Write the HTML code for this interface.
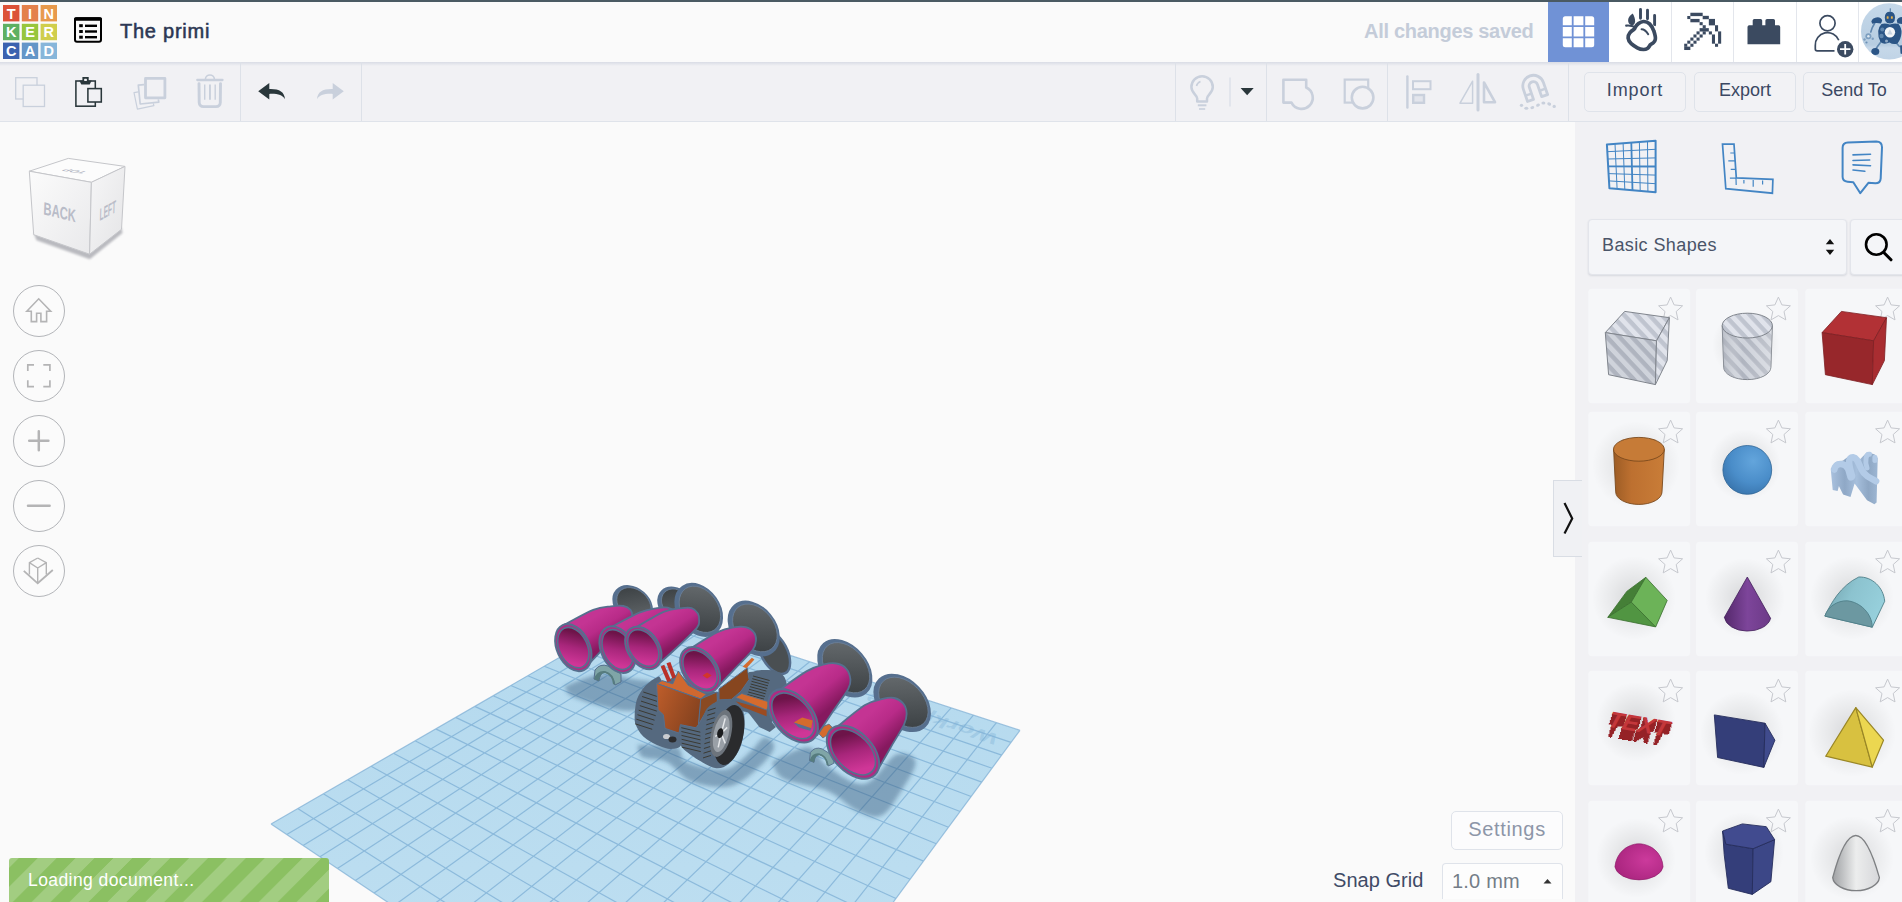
<!DOCTYPE html>
<html lang="en">
<head>
<meta charset="utf-8">
<title>Tinkercad</title>
<style>
*{box-sizing:border-box;margin:0;padding:0}
html,body{width:1902px;height:902px;overflow:hidden;background:#fafafa;font-family:"Liberation Sans",sans-serif;color:#3b4863}
.abs{position:absolute}
#topstrip{left:0;top:0;width:1902px;height:2px;background:#4a5a63}
#header{left:0;top:2px;width:1902px;height:60px;background:#fafafa}
#toolbar{left:0;top:62px;width:1902px;height:60px;background:#f1f1f4;border-bottom:1px solid #dfe3ea}
#toolbar:before{content:"";position:absolute;left:0;top:0;width:100%;height:4px;background:linear-gradient(#d9dce5,#f1f1f4)}
.vdiv{position:absolute;top:62px;width:1px;height:59px;background:#dde1e8}
#viewport{left:0;top:122px;width:1575px;height:780px;background:#fafafa;overflow:hidden}
#panel{left:1575px;top:122px;width:327px;height:780px;background:#f1f1f4;overflow:hidden}
#title{left:120px;top:17px;font-size:20px;line-height:28px;color:#2c3753;font-weight:normal;-webkit-text-stroke:0.55px #2c3753;letter-spacing:0.75px;white-space:nowrap}
#saved{right:368.500px;top:17px;font-size:20px;line-height:28px;color:#c4ccd9;font-weight:bold;white-space:nowrap;letter-spacing:-0.300px}
.htile{position:absolute;top:2px;height:60px;background:#fff;border-left:1px solid #e3e6ec}
.tbtn{position:absolute;top:72px;height:40px;border:1px solid #dfe3ea;border-radius:5px;background:#f2f2f5;font-size:18px;line-height:35px;text-align:center;color:#3b4863;white-space:nowrap}
.tile{position:absolute;width:102px;height:115px;background:#f6f7f9;border-radius:4px}
.navbtn{position:absolute;left:13px;width:52px;height:52px;border:1.150px solid #b3b5b9;border-radius:50%;background:#fbfbfb}
</style>
</head>
<body>
<div id="topstrip" class="abs"></div>
<div id="header" class="abs"></div>
<div id="toolbar" class="abs"></div>
<div id="viewport" class="abs"><!--SCENE-START--><svg class="abs" style="left:0;top:0" width="1575" height="780" viewBox="0 122 1575 780">
<defs>
<linearGradient id="wpg" x1="0" y1="0" x2="0" y2="1"><stop offset="0" stop-color="#b4d9ee"/><stop offset="1" stop-color="#c2e1f2"/></linearGradient>
</defs>
<polygon points="645.0,608.0 1020.0,730.3 726.0,1129.0 271.0,824.0" fill="url(#wpg)"/>
<path d="M645.0 608.0L271.0 824.0M645.0 608.0L1020.0 730.3M659.8 612.8L286.8 834.6M632.0 615.5L1011.0 742.4M675.0 617.8L303.1 845.5M618.6 623.3L1001.7 755.1M690.5 622.9L320.0 856.8M604.7 631.3L992.0 768.3M706.4 628.0L337.4 868.5M590.4 639.5L981.8 782.1M722.6 633.3L355.4 880.6M575.5 648.1L971.2 796.5M739.3 638.7L374.1 893.1M560.2 657.0L960.1 811.5M756.3 644.3L393.4 906.0M544.3 666.2L948.5 827.3M773.7 650.0L413.4 919.5M527.8 675.7L936.3 843.8M791.5 655.8L434.2 933.4M510.8 685.5L923.5 861.1M809.7 661.7L455.7 947.8M493.1 695.7L910.1 879.3M828.4 667.8L478.1 962.8M474.7 706.4L896.0 898.5M847.6 674.1L501.3 978.4M455.6 717.4L881.1 918.6M867.2 680.5L525.5 994.6M435.7 728.9L865.4 939.9M887.4 687.1L550.6 1011.4M415.0 740.8L848.9 962.4M908.1 693.8L576.8 1029.0M393.5 753.2L831.4 986.1M929.3 700.7L604.1 1047.3M371.1 766.2L812.8 1011.3M951.1 707.8L632.6 1066.4M347.7 779.7L793.1 1038.0M973.4 715.1L662.4 1086.3M323.3 793.8L772.1 1066.4M996.4 722.6L693.5 1107.2M297.7 808.6L749.8 1096.7M1020.0 730.3L726.0 1129.0M271.0 824.0L726.0 1129.0" stroke="#6fa5cf" stroke-opacity="0.62" stroke-width="1.2" fill="none"/>
<text transform="matrix(-0.951 -0.31 0.368 -0.499 1000.5 735.5)" font-family="Liberation Sans,sans-serif" font-size="27" font-weight="bold" fill="#7fb2d6" fill-opacity="0.4">Workplane</text>
<defs><filter id="shb" x="-20%" y="-20%" width="140%" height="140%"><feGaussianBlur stdDeviation="2.2"/></filter></defs>
<g filter="url(#shb)" fill="#2f5375" fill-opacity="0.42">
<path d="M564.4 686.3 C570.5 684.3 589.6 675.4 601.0 674.1 C612.4 672.9 623.3 677.4 632.7 679.0 C642.0 680.7 653.4 680.2 657.1 683.9 C660.7 687.6 658.7 696.5 654.6 701.0 C650.6 705.4 641.6 709.9 632.7 710.7 C623.7 711.5 611.1 708.3 601.0 705.9 C590.8 703.4 577.8 699.3 571.7 696.1 C565.6 692.8 565.6 688.0 564.4 686.3 Z" />
<path d="M637.6 744.9 C644.1 745.3 668.5 744.5 676.6 747.3 C684.7 750.2 678.2 758.3 686.3 762.0 C694.5 765.6 714.8 770.9 725.4 769.3 C735.9 767.6 743.3 757.5 749.8 752.2 C756.3 746.9 760.3 738.4 764.4 737.6 C768.5 736.7 775.0 742.4 774.1 747.3 C773.3 752.2 766.8 760.3 759.5 766.8 C752.2 773.3 741.6 783.9 730.2 786.3 C718.9 788.8 701.8 785.5 691.2 781.5 C680.7 777.4 675.0 766.0 666.8 762.0 C658.7 757.9 647.3 759.9 642.4 757.1 C637.6 754.2 638.4 746.9 637.6 744.9 Z" />
<path d="M771.7 762.0 C777.8 759.5 798.9 746.5 808.3 747.3 C817.6 748.1 818.5 760.7 827.8 766.8 C837.2 772.9 853.0 785.9 864.4 783.9 C875.8 781.9 887.6 758.3 896.1 754.6 C904.6 751.0 914.8 755.9 915.6 762.0 C916.4 768.0 906.7 782.3 901.0 791.2 C895.3 800.2 888.8 812.4 881.5 815.6 C874.1 818.9 866.0 814.8 857.1 810.7 C848.1 806.7 840.0 796.5 827.8 791.2 C815.6 785.9 793.3 783.9 783.9 779.0 C774.6 774.1 773.7 764.8 771.7 762.0 Z" />
</g>
<g transform="translate(594.0 665.0) scale(1.00)"><path d="M0 14 L1 5 Q6 -2 14 1 L27 9 L27 17 L21 20 Q19 9 11 7 Q6 7 5 16 Z" fill="#7fa5a7" stroke="#566f8e" stroke-width="1"/><path d="M0 14 L5 16 Q6 8 11 8 Q18 10 19 19 L21 20 Q20 8 11 6 Q3 5 0 14Z" fill="#567c7e"/></g>
<linearGradient id="cb0" gradientUnits="userSpaceOnUse" x1="591.3" y1="618.6" x2="607.1" y2="643.4"><stop offset="0" stop-color="#c43493"/><stop offset="0.45" stop-color="#b82b88"/><stop offset="1" stop-color="#86195f"/></linearGradient>
<linearGradient id="ci0" gradientUnits="userSpaceOnUse" x1="561.2" y1="637.9" x2="585.3" y2="657.3"><stop offset="0" stop-color="#6d1449"/><stop offset="0.5" stop-color="#a8267b"/><stop offset="1" stop-color="#cf3697"/></linearGradient>
<linearGradient id="dg0" gradientUnits="userSpaceOnUse" x1="616.8" y1="592.0" x2="648.5" y2="617.5"><stop offset="0" stop-color="#666b6e"/><stop offset="1" stop-color="#3b4043"/></linearGradient>
<ellipse cx="632.7" cy="604.8" rx="21.3" ry="15.9" transform="rotate(-138.3 632.7 604.8)" fill="#566f8e" stroke="#566f8e" stroke-width="2.5"/>
<ellipse cx="633.9" cy="604.2" rx="19.1" ry="14.3" transform="rotate(-138.3 633.9 604.2)" fill="url(#dg0)" stroke="#6b8099" stroke-width="0.8"/>
<path d="M563.9 625.0 C568.8 622.5 585.4 613.0 593.2 609.9 C601.0 606.8 605.9 607.0 610.9 606.4 C616.0 605.7 620.1 605.4 623.4 606.0 C626.6 606.6 629.0 608.2 630.5 609.9 C631.9 611.6 632.4 613.9 632.2 616.1 C632.1 618.3 633.1 619.1 629.6 623.2 C626.0 627.3 617.5 634.4 610.9 640.9 C604.4 647.5 593.9 658.7 590.5 662.2 Z" fill="url(#cb0)" stroke="#566f8e" stroke-width="1.8" stroke-linejoin="round"/>
<ellipse cx="573.3" cy="647.6" rx="24.8" ry="16.3" transform="rotate(64.7 573.3 647.6)" fill="#b02a82" stroke="#566f8e" stroke-width="2"/>
<ellipse cx="573.3" cy="647.6" rx="21.3" ry="14.1" transform="rotate(64.7 573.3 647.6)" fill="url(#ci0)" stroke="#566f8e" stroke-width="1.6"/>
<linearGradient id="cb1" gradientUnits="userSpaceOnUse" x1="634.3" y1="620.3" x2="651.0" y2="644.5"><stop offset="0" stop-color="#c43493"/><stop offset="0.45" stop-color="#b82b88"/><stop offset="1" stop-color="#86195f"/></linearGradient>
<linearGradient id="ci1" gradientUnits="userSpaceOnUse" x1="605.2" y1="640.3" x2="629.9" y2="659.0"><stop offset="0" stop-color="#6d1449"/><stop offset="0.5" stop-color="#a8267b"/><stop offset="1" stop-color="#cf3697"/></linearGradient>
<linearGradient id="dg1" gradientUnits="userSpaceOnUse" x1="661.2" y1="593.4" x2="691.6" y2="617.5"><stop offset="0" stop-color="#666b6e"/><stop offset="1" stop-color="#3b4043"/></linearGradient>
<ellipse cx="676.4" cy="605.5" rx="20.1" ry="15.2" transform="rotate(-136.0 676.4 605.5)" fill="#566f8e" stroke="#566f8e" stroke-width="2.5"/>
<ellipse cx="677.6" cy="604.9" rx="18.1" ry="13.7" transform="rotate(-136.0 677.6 604.9)" fill="url(#dg1)" stroke="#6b8099" stroke-width="0.8"/>
<path d="M608.3 628.5 C613.5 625.9 631.2 616.0 639.3 612.6 C647.5 609.2 652.3 609.0 657.1 608.1 C661.8 607.3 664.7 607.0 667.7 607.6 C670.7 608.2 673.3 610.0 674.8 611.7 C676.3 613.4 676.7 615.7 676.6 617.9 C676.4 620.1 677.5 620.8 673.9 625.0 C670.4 629.1 661.8 636.5 655.3 642.7 C648.8 648.9 638.3 659.0 634.9 662.2 Z" fill="url(#cb1)" stroke="#566f8e" stroke-width="1.8" stroke-linejoin="round"/>
<ellipse cx="617.6" cy="649.6" rx="24.6" ry="16.3" transform="rotate(64.1 617.6 649.6)" fill="#b02a82" stroke="#566f8e" stroke-width="2"/>
<ellipse cx="617.6" cy="649.6" rx="21.1" ry="14.0" transform="rotate(64.1 617.6 649.6)" fill="url(#ci1)" stroke="#566f8e" stroke-width="1.6"/>
<linearGradient id="cb2" gradientUnits="userSpaceOnUse" x1="660.5" y1="620.8" x2="675.4" y2="644.6"><stop offset="0" stop-color="#c43493"/><stop offset="0.45" stop-color="#b82b88"/><stop offset="1" stop-color="#86195f"/></linearGradient>
<linearGradient id="ci2" gradientUnits="userSpaceOnUse" x1="631.9" y1="638.6" x2="654.7" y2="657.5"><stop offset="0" stop-color="#6d1449"/><stop offset="0.5" stop-color="#a8267b"/><stop offset="1" stop-color="#cf3697"/></linearGradient>
<linearGradient id="dg2" gradientUnits="userSpaceOnUse" x1="678.5" y1="593.1" x2="719.0" y2="626.7"><stop offset="0" stop-color="#666b6e"/><stop offset="1" stop-color="#3b4043"/></linearGradient>
<ellipse cx="698.7" cy="609.9" rx="28.0" ry="20.3" transform="rotate(55.2 698.7 609.9)" fill="#566f8e" stroke="#566f8e" stroke-width="2.5"/>
<ellipse cx="699.9" cy="609.3" rx="25.2" ry="18.2" transform="rotate(55.2 699.9 609.3)" fill="url(#dg2)" stroke="#6b8099" stroke-width="0.8"/>
<path d="M634.0 628.5 C639.0 625.7 656.2 615.1 664.2 611.7 C672.1 608.3 677.3 608.7 681.9 608.1 C686.5 607.5 689.0 607.2 691.6 608.1 C694.3 609.0 696.6 611.4 697.9 613.5 C699.1 615.5 699.2 618.2 699.1 620.5 C699.0 622.9 700.1 623.7 697.0 627.6 C693.8 631.6 686.2 638.7 680.1 644.5 C674.1 650.3 663.9 659.3 660.6 662.2 Z" fill="url(#cb2)" stroke="#566f8e" stroke-width="1.8" stroke-linejoin="round"/>
<ellipse cx="643.3" cy="648.0" rx="23.2" ry="15.6" transform="rotate(57.2 643.3 648.0)" fill="#b02a82" stroke="#566f8e" stroke-width="2"/>
<ellipse cx="643.3" cy="648.0" rx="20.0" ry="13.4" transform="rotate(57.2 643.3 648.0)" fill="url(#ci2)" stroke="#566f8e" stroke-width="1.6"/>
<ellipse cx="774.0" cy="652.0" rx="24.0" ry="13.0" transform="rotate(62.0 774.0 652.0)" fill="#4a4f52" stroke="#566f8e" stroke-width="2.5"/>
<defs><linearGradient id="og1" x1="0" y1="0" x2="1" y2="0.5"><stop offset="0" stop-color="#c05e2b"/><stop offset="1" stop-color="#87431f"/></linearGradient></defs>
<polygon points="662.7,684.7 678.0,673.2 698.4,689.8 721.4,692.4 749.4,672.0 774.9,669.9 783.8,682.2 782.6,702.6 771.1,722.9 749.4,712.7 734.1,708.9 703.5,728.0 672.9,733.1 662.7,722.9" fill="#55697f"/>
<path d="M748.8 681.1 C749.3 679.8 750.1 675.2 751.9 673.4 C753.7 671.5 755.8 670.6 759.6 670.3 C763.5 669.9 771.0 669.9 775.2 671.0 C779.3 672.2 782.5 673.9 784.5 677.2 C786.5 680.6 787.6 687.1 787.3 691.2 C786.9 695.3 784.5 699.6 782.1 702.1 C779.7 704.5 776.6 705.9 772.8 705.9 C769.1 705.9 763.5 704.5 759.6 702.1 C755.8 699.6 751.4 694.7 749.6 691.2 C747.7 687.7 748.9 682.8 748.8 681.1 Z" fill="#55697f"/>
<path d="M753.1 676.0l16.5 4.5M752.3 678.7l16.5 4.5M751.5 681.3l16.5 4.5M750.7 684.0l16.5 4.5M749.9 686.6l16.5 4.5M749.1 689.3l16.5 4.5M748.3 692.0l16.5 4.5M747.5 694.6l16.5 4.5" stroke="#3b3a33" stroke-width="1.0" fill="none"/>
<path d="M634.7 712.9 C635.1 710.6 635.4 703.4 637.1 699.0 C638.7 694.6 641.7 690.0 644.8 686.5 C647.9 683.1 653.0 679.3 655.7 678.0 C658.3 676.7 658.8 674.8 660.7 678.8 C662.5 682.8 664.5 694.0 666.5 702.1 C668.6 710.1 670.4 721.7 672.8 726.9 C675.1 732.1 679.2 730.0 680.5 733.1 C681.9 736.2 682.4 742.9 680.8 745.5 C679.3 748.1 674.9 748.9 671.2 748.9 C667.5 749.0 663.4 747.9 658.8 745.8 C654.1 743.7 647.2 740.1 643.3 736.5 C639.4 732.9 636.9 728.0 635.5 724.1 C634.1 720.2 634.9 714.8 634.7 712.9 Z" fill="#55697f"/>
<path d="M643.3 692.0l17.0 5.5M642.1 696.5l17.0 5.5M641.0 701.1l17.0 5.5M639.8 705.6l17.0 5.5M638.7 710.2l17.0 5.5M637.5 714.7l17.0 5.5M636.4 719.2l17.0 5.5M635.2 723.8l17.0 5.5" stroke="#3b3a33" stroke-width="1.0" fill="none"/>
<polygon points="743.4,705.9 766.6,715.7 775.9,726.9 769.7,731.9 759.6,727.2 748.8,713.2" fill="#55697f"/>
<polygon points="719.0,688.9 747.2,667.9 749.1,679.6 741.0,691.2 731.7,699.3 719.0,699.9" fill="#87461f" stroke="#566f8e" stroke-width="1"/>
<polygon points="742.6,666.7 751.9,657.8 754.4,659.6 746.5,668.2" fill="#d46b2e"/>
<polygon points="735.6,701.3 766.6,710.1 766.6,716.3 742.6,707.0" fill="#9c4b20"/>
<polygon points="735.6,697.4 741.8,693.5 769.7,702.1 766.6,710.1" fill="#d56b2d" stroke="#566f8e" stroke-width="0.8"/>
<polygon points="656.5,683.4 662.2,680.7 672.8,683.8 678.2,671.0 688.3,685.3 706.3,694.3 700.7,699.0" fill="#cf6830" stroke="#566f8e" stroke-width="1"/>
<polygon points="660.7,666.4 664.2,664.8 671.2,680.7 667.3,681.9" fill="#b93129"/>
<polygon points="666.5,663.3 670.4,662.0 675.9,677.2 672.4,678.8" fill="#b93129"/>
<polygon points="700.7,699.0 717.0,692.0 717.4,701.3 706.9,710.1 698.4,724.6" fill="#8a4a22" stroke="#566f8e" stroke-width="1"/>
<polygon points="656.5,683.4 700.7,699.0 698.4,724.6 696.0,727.8 680.5,724.7 679.0,733.1 665.0,728.4 663.4,714.8 658.0,709.8" fill="url(#og1)" stroke="#566f8e" stroke-width="1"/>
<path d="M679.9 725.0 C682.8 725.4 693.1 729.9 697.6 727.2 C702.1 724.5 703.3 713.0 706.9 708.6 C710.5 704.2 715.2 702.3 719.3 700.8 C723.4 699.4 727.8 698.4 731.7 699.9 C735.6 701.4 740.5 705.3 742.6 709.8 C744.7 714.3 744.9 720.4 744.4 726.9 C744.0 733.4 742.4 742.4 739.8 748.6 C737.1 754.8 732.5 760.9 728.6 764.1 C724.7 767.4 720.9 768.6 716.2 768.2 C711.5 767.7 706.4 764.8 700.7 761.3 C695.0 757.9 685.6 751.6 682.1 747.4 C678.5 743.2 679.9 739.9 679.6 736.2 C679.2 732.5 679.8 726.9 679.9 725.0 Z" fill="#55697f"/>
<path d="M681.3 727.7l19.0 4.5M681.4 731.5l19.0 4.5M681.5 735.4l19.0 4.5M681.6 739.3l19.0 4.5M681.7 743.2l19.0 4.5M681.8 747.1l19.0 4.5" stroke="#3b3a33" stroke-width="1.0" fill="none"/>
<path d="M707.7 710.6l8.0 -2.5M707.2 715.3l8.0 -2.5M706.7 720.1l8.0 -2.5M706.3 724.8l8.0 -2.5M705.8 729.5l8.0 -2.5M705.3 734.3l8.0 -2.5M704.9 739.0l8.0 -2.5M704.4 743.7l8.0 -2.5M703.9 748.5l8.0 -2.5M703.5 753.2l8.0 -2.5M703.0 757.9l8.0 -2.5" stroke="#3b3a33" stroke-width="1.0" fill="none"/>
<ellipse cx="729.1" cy="735.0" rx="14" ry="30.5" transform="rotate(13 729.1 735.0)" fill="#2a2b2d"/>
<ellipse cx="721.2" cy="733.4" rx="10" ry="24" transform="rotate(13 721.2 733.4)" fill="#6d747c"/>
<ellipse cx="721.2" cy="733.4" rx="7.5" ry="19" transform="rotate(13 721.2 733.4)" fill="#9aa0a7"/>
<path d="M721.2 733.4 l4 -15 M721.2 733.4 l6 -6 M721.2 733.4 l-6 3 M721.2 733.4 l-3 14 M721.2 733.4 l4 10" stroke="#e4e6e9" stroke-width="1.5"/>
<ellipse cx="720.2" cy="733.4" rx="3" ry="5" transform="rotate(13 721.2 733.4)" fill="#1b1c1e"/>
<ellipse cx="666.5" cy="736.5" rx="3.5" ry="2.6" fill="#c9ccd0"/>
<ellipse cx="672.5" cy="739.5" rx="4" ry="3" fill="#2b2c2e"/>
<linearGradient id="cb3" gradientUnits="userSpaceOnUse" x1="715.5" y1="641.6" x2="732.1" y2="666.5"><stop offset="0" stop-color="#c43493"/><stop offset="0.45" stop-color="#b82b88"/><stop offset="1" stop-color="#86195f"/></linearGradient>
<linearGradient id="ci3" gradientUnits="userSpaceOnUse" x1="687.7" y1="660.1" x2="712.5" y2="679.5"><stop offset="0" stop-color="#6d1449"/><stop offset="0.5" stop-color="#a8267b"/><stop offset="1" stop-color="#cf3697"/></linearGradient>
<linearGradient id="dg3" gradientUnits="userSpaceOnUse" x1="732.7" y1="610.7" x2="774.7" y2="646.4"><stop offset="0" stop-color="#666b6e"/><stop offset="1" stop-color="#3b4043"/></linearGradient>
<ellipse cx="753.7" cy="628.5" rx="29.7" ry="21.0" transform="rotate(51.0 753.7 628.5)" fill="#566f8e" stroke="#566f8e" stroke-width="2.5"/>
<ellipse cx="754.9" cy="627.9" rx="26.7" ry="18.9" transform="rotate(51.0 754.9 627.9)" fill="url(#dg3)" stroke="#6b8099" stroke-width="0.8"/>
<path d="M689.9 648.9 C694.5 646.1 709.8 635.7 717.4 632.1 C724.9 628.4 730.4 627.9 735.1 627.1 C739.8 626.3 742.6 626.3 745.7 627.1 C748.9 627.9 752.0 629.9 753.7 632.1 C755.4 634.2 756.2 637.1 756.0 640.1 C755.9 643.0 756.0 645.4 752.8 649.8 C749.6 654.2 742.5 660.8 736.9 666.7 C731.3 672.6 722.1 682.2 719.1 685.3 Z" fill="url(#cb3)" stroke="#566f8e" stroke-width="1.8" stroke-linejoin="round"/>
<ellipse cx="700.1" cy="669.8" rx="25.2" ry="16.6" transform="rotate(54.2 700.1 669.8)" fill="#b02a82" stroke="#566f8e" stroke-width="2"/>
<ellipse cx="700.1" cy="669.8" rx="21.7" ry="14.3" transform="rotate(54.2 700.1 669.8)" fill="url(#ci3)" stroke="#566f8e" stroke-width="1.6"/>
<polygon points="702.6,675.4 707.1,672.4 711.6,675.4 707.1,678.4" fill="#d2362b"/>
<polygon points="815.1,729.8 829.0,724.1 834.6,729.8 822.9,738.0" fill="#d56b2d" stroke="#566f8e" stroke-width="0.8"/>
<g transform="translate(809.5 748.0) scale(0.90)"><path d="M0 14 L1 5 Q6 -2 14 1 L27 9 L27 17 L21 20 Q19 9 11 7 Q6 7 5 16 Z" fill="#7fa5a7" stroke="#566f8e" stroke-width="1"/><path d="M0 14 L5 16 Q6 8 11 8 Q18 10 19 19 L21 20 Q20 8 11 6 Q3 5 0 14Z" fill="#567c7e"/></g>
<linearGradient id="cb4" gradientUnits="userSpaceOnUse" x1="806.3" y1="682.6" x2="828.2" y2="709.4"><stop offset="0" stop-color="#c43493"/><stop offset="0.45" stop-color="#b82b88"/><stop offset="1" stop-color="#86195f"/></linearGradient>
<linearGradient id="ci4" gradientUnits="userSpaceOnUse" x1="777.7" y1="706.1" x2="808.5" y2="725.5"><stop offset="0" stop-color="#6d1449"/><stop offset="0.5" stop-color="#a8267b"/><stop offset="1" stop-color="#cf3697"/></linearGradient>
<linearGradient id="dg4" gradientUnits="userSpaceOnUse" x1="823.4" y1="649.2" x2="866.2" y2="687.5"><stop offset="0" stop-color="#666b6e"/><stop offset="1" stop-color="#3b4043"/></linearGradient>
<ellipse cx="844.8" cy="668.3" rx="31.9" ry="21.4" transform="rotate(49.5 844.8 668.3)" fill="#566f8e" stroke="#566f8e" stroke-width="2.5"/>
<ellipse cx="846.0" cy="667.7" rx="28.7" ry="19.3" transform="rotate(49.5 846.0 667.7)" fill="url(#dg4)" stroke="#6b8099" stroke-width="0.8"/>
<path d="M778.0 690.9 C782.8 687.7 798.7 675.9 806.4 671.4 C814.1 667.0 819.1 665.7 824.2 664.3 C829.2 663.0 832.9 662.7 836.6 663.5 C840.3 664.2 844.0 666.1 846.3 668.8 C848.6 671.4 850.1 676.0 850.4 679.4 C850.7 682.8 851.0 683.9 848.1 689.2 C845.2 694.5 838.2 703.7 833.0 711.3 C827.9 719.0 819.7 731.3 817.1 735.3 Z" fill="url(#cb4)" stroke="#566f8e" stroke-width="1.8" stroke-linejoin="round"/>
<ellipse cx="793.1" cy="715.8" rx="30.9" ry="19.2" transform="rotate(49.5 793.1 715.8)" fill="#b02a82" stroke="#566f8e" stroke-width="2"/>
<ellipse cx="793.1" cy="715.8" rx="26.6" ry="16.5" transform="rotate(49.5 793.1 715.8)" fill="url(#ci4)" stroke="#566f8e" stroke-width="1.6"/>
<linearGradient id="cb5" gradientUnits="userSpaceOnUse" x1="863.6" y1="718.5" x2="887.5" y2="745.0"><stop offset="0" stop-color="#c43493"/><stop offset="0.45" stop-color="#b82b88"/><stop offset="1" stop-color="#86195f"/></linearGradient>
<linearGradient id="ci5" gradientUnits="userSpaceOnUse" x1="836.6" y1="742.9" x2="869.3" y2="761.4"><stop offset="0" stop-color="#6d1449"/><stop offset="0.5" stop-color="#a8267b"/><stop offset="1" stop-color="#cf3697"/></linearGradient>
<linearGradient id="dg5" gradientUnits="userSpaceOnUse" x1="880.2" y1="683.5" x2="924.2" y2="722.4"><stop offset="0" stop-color="#666b6e"/><stop offset="1" stop-color="#3b4043"/></linearGradient>
<ellipse cx="902.2" cy="702.9" rx="32.4" ry="22.0" transform="rotate(46.2 902.2 702.9)" fill="#566f8e" stroke="#566f8e" stroke-width="2.5"/>
<ellipse cx="903.4" cy="702.3" rx="29.2" ry="19.8" transform="rotate(46.2 903.4 702.3)" fill="url(#dg5)" stroke="#6b8099" stroke-width="0.8"/>
<path d="M836.6 727.3 C841.3 723.6 857.3 709.9 865.0 705.1 C872.6 700.4 877.8 700.1 882.7 698.9 C887.6 697.7 890.8 697.3 894.2 698.0 C897.6 698.8 901.0 700.9 903.1 703.4 C905.2 705.9 906.5 709.6 906.6 713.1 C906.8 716.7 906.5 719.2 904.0 724.6 C901.5 730.1 895.8 738.5 891.6 745.9 C887.3 753.3 880.5 765.1 878.3 769.0 Z" fill="url(#cb5)" stroke="#566f8e" stroke-width="1.8" stroke-linejoin="round"/>
<ellipse cx="853.0" cy="752.1" rx="31.6" ry="19.8" transform="rotate(46.1 853.0 752.1)" fill="#b02a82" stroke="#566f8e" stroke-width="2"/>
<ellipse cx="853.0" cy="752.1" rx="27.2" ry="17.0" transform="rotate(46.1 853.0 752.1)" fill="url(#ci5)" stroke="#566f8e" stroke-width="1.6"/>
<polygon points="793.7,722.4 802.2,717.6 812.7,720.5 811.2,728.3" fill="#d56b2d"/>
<polygon points="793.7,722.4 811.2,728.3 810.2,730.7 798.5,727.3" fill="#56708f"/>
</svg><!--SCENE-END--></div>
<div id="panel" class="abs"></div>
<!--PANEL-START--><svg class="abs" style="left:1575px;top:122px" width="327" height="780" viewBox="1575 122 327 780">
<defs>
<pattern id="stp" width="9.2" height="9.2" patternUnits="userSpaceOnUse" patternTransform="rotate(47)"><rect width="9.2" height="9.2" fill="#cfd3db"/><rect width="9.2" height="4.4" fill="#afb4bf"/></pattern>
<pattern id="stpl" width="9.2" height="9.2" patternUnits="userSpaceOnUse" patternTransform="rotate(47)"><rect width="9.2" height="9.2" fill="#e0e3eb"/><rect width="9.2" height="4.4" fill="#bfc4cf"/></pattern>
<pattern id="stpd" width="9.2" height="9.2" patternUnits="userSpaceOnUse" patternTransform="rotate(47)"><rect width="9.2" height="9.2" fill="#c6cad3"/><rect width="9.2" height="4.400" fill="#aeb3bd"/></pattern>
<radialGradient id="halo"><stop offset="0" stop-color="#000" stop-opacity="0.13"/><stop offset="0.55" stop-color="#000" stop-opacity="0.055"/><stop offset="1" stop-color="#000" stop-opacity="0"/></radialGradient>
<linearGradient id="gcyl" x1="0" x2="1"><stop offset="0" stop-color="#9c5c25"/><stop offset="0.35" stop-color="#bd7030"/><stop offset="1" stop-color="#c97d38"/></linearGradient>
<radialGradient id="gsph" cx="0.62" cy="0.32" r="0.75"><stop offset="0" stop-color="#63a5dc"/><stop offset="0.6" stop-color="#4a8dc9"/><stop offset="1" stop-color="#3873ab"/></radialGradient>
<linearGradient id="gcone" x1="0" x2="1"><stop offset="0" stop-color="#55296c"/><stop offset="0.5" stop-color="#7d459a"/><stop offset="1" stop-color="#6c3a87"/></linearGradient>
<radialGradient id="gdome" cx="0.65" cy="0.45" r="0.7"><stop offset="0" stop-color="#cc3a9c"/><stop offset="1" stop-color="#a8247d"/></radialGradient>
<linearGradient id="gpar" x1="0" x2="1"><stop offset="0" stop-color="#9fa1a4"/><stop offset="0.5" stop-color="#eceded"/><stop offset="1" stop-color="#d6d7da"/></linearGradient>
<linearGradient id="ghc" x1="0" x2="1"><stop offset="0" stop-color="#a6abb5" stop-opacity="0.55"/><stop offset="0.4" stop-color="#fff" stop-opacity="0"/><stop offset="1" stop-color="#fff" stop-opacity="0.25"/></linearGradient>
<filter id="ext" x="-10%" y="-40%" width="120%" height="200%"><feMorphology operator="dilate" radius="0 5"/><feOffset dy="5.500"/></filter>
<linearGradient id="gscr" x1="0" x2="1"><stop offset="0" stop-color="#a9c1de"/><stop offset="0.3" stop-color="#8fa8c6"/><stop offset="0.55" stop-color="#a6bfdc"/><stop offset="0.8" stop-color="#8ea7c4"/><stop offset="1" stop-color="#9db6d3"/></linearGradient>
<linearGradient id="grr" x1="0" y1="0" x2="1" y2="0.4"><stop offset="0" stop-color="#6f9fa9"/><stop offset="0.5" stop-color="#8cc3cf"/><stop offset="1" stop-color="#96cfdb"/></linearGradient>
</defs>
<rect x="1588.2" y="288.8" width="102" height="114.4" rx="4" fill="#f6f7f9"/>
<polygon points="1670.6,297.1 1674.1,304.9 1682.6,305.8 1676.2,311.5 1678.0,319.9 1670.6,315.6 1663.2,319.9 1665.0,311.5 1658.6,305.8 1667.1,304.9" fill="none" stroke="#c6c8ce" stroke-width="1" stroke-linejoin="round"/>
<rect x="1696.0" y="288.8" width="102" height="114.4" rx="4" fill="#f6f7f9"/>
<circle cx="1746.0" cy="345.0" r="34.0" fill="url(#halo)"/>
<polygon points="1778.4,297.1 1781.9,304.9 1790.4,305.8 1784.0,311.5 1785.8,319.9 1778.4,315.6 1771.0,319.9 1772.8,311.5 1766.4,305.8 1774.9,304.9" fill="none" stroke="#c6c8ce" stroke-width="1" stroke-linejoin="round"/>
<rect x="1805.2" y="288.8" width="102" height="114.4" rx="4" fill="#f6f7f9"/>
<polygon points="1887.6,297.1 1891.1,304.9 1899.6,305.8 1893.2,311.5 1895.0,319.9 1887.6,315.6 1880.2,319.9 1882.0,311.5 1875.6,305.8 1884.1,304.9" fill="none" stroke="#c6c8ce" stroke-width="1" stroke-linejoin="round"/>
<rect x="1588.2" y="411.8" width="102" height="114.4" rx="4" fill="#f6f7f9"/>
<circle cx="1636.0" cy="465.0" r="44.0" fill="url(#halo)"/>
<polygon points="1670.6,420.1 1674.1,427.9 1682.6,428.8 1676.2,434.5 1678.0,442.9 1670.6,438.6 1663.2,442.9 1665.0,434.5 1658.6,428.8 1667.1,427.9" fill="none" stroke="#c6c8ce" stroke-width="1" stroke-linejoin="round"/>
<rect x="1696.0" y="411.8" width="102" height="114.4" rx="4" fill="#f6f7f9"/>
<circle cx="1745.0" cy="465.0" r="36.0" fill="url(#halo)"/>
<polygon points="1778.4,420.1 1781.9,427.9 1790.4,428.8 1784.0,434.5 1785.8,442.9 1778.4,438.6 1771.0,442.9 1772.8,434.5 1766.4,428.8 1774.9,427.9" fill="none" stroke="#c6c8ce" stroke-width="1" stroke-linejoin="round"/>
<rect x="1805.2" y="411.8" width="102" height="114.4" rx="4" fill="#f6f7f9"/>
<polygon points="1887.6,420.1 1891.1,427.9 1899.6,428.8 1893.2,434.5 1895.0,442.9 1887.6,438.6 1880.2,442.9 1882.0,434.5 1875.6,428.8 1884.1,427.9" fill="none" stroke="#c6c8ce" stroke-width="1" stroke-linejoin="round"/>
<rect x="1588.2" y="541.8" width="102" height="114.4" rx="4" fill="#f6f7f9"/>
<circle cx="1634.0" cy="598.0" r="42.0" fill="url(#halo)"/>
<polygon points="1670.6,550.1 1674.1,557.9 1682.6,558.8 1676.2,564.5 1678.0,572.9 1670.6,568.6 1663.2,572.9 1665.0,564.5 1658.6,558.8 1667.1,557.9" fill="none" stroke="#c6c8ce" stroke-width="1" stroke-linejoin="round"/>
<rect x="1696.0" y="541.8" width="102" height="114.4" rx="4" fill="#f6f7f9"/>
<circle cx="1745.0" cy="598.0" r="40.0" fill="url(#halo)"/>
<polygon points="1778.4,550.1 1781.9,557.9 1790.4,558.8 1784.0,564.5 1785.8,572.9 1778.4,568.6 1771.0,572.9 1772.8,564.5 1766.4,558.8 1774.9,557.9" fill="none" stroke="#c6c8ce" stroke-width="1" stroke-linejoin="round"/>
<rect x="1805.2" y="541.8" width="102" height="114.4" rx="4" fill="#f6f7f9"/>
<circle cx="1852.0" cy="598.0" r="42.0" fill="url(#halo)"/>
<polygon points="1887.6,550.1 1891.1,557.9 1899.6,558.8 1893.2,564.5 1895.0,572.9 1887.6,568.6 1880.2,572.9 1882.0,564.5 1875.6,558.8 1884.1,557.9" fill="none" stroke="#c6c8ce" stroke-width="1" stroke-linejoin="round"/>
<rect x="1588.2" y="670.8" width="102" height="114.4" rx="4" fill="#f6f7f9"/>
<circle cx="1636.0" cy="722.0" r="40.0" fill="url(#halo)"/>
<polygon points="1670.6,679.1 1674.1,686.9 1682.6,687.8 1676.2,693.5 1678.0,701.9 1670.6,697.6 1663.2,701.9 1665.0,693.5 1658.6,687.8 1667.1,686.9" fill="none" stroke="#c6c8ce" stroke-width="1" stroke-linejoin="round"/>
<rect x="1696.0" y="670.8" width="102" height="114.4" rx="4" fill="#f6f7f9"/>
<circle cx="1742.0" cy="733.0" r="42.0" fill="url(#halo)"/>
<polygon points="1778.4,679.1 1781.9,686.9 1790.4,687.8 1784.0,693.5 1785.8,701.9 1778.4,697.6 1771.0,701.9 1772.8,693.5 1766.4,687.8 1774.9,686.9" fill="none" stroke="#c6c8ce" stroke-width="1" stroke-linejoin="round"/>
<rect x="1805.2" y="670.8" width="102" height="114.4" rx="4" fill="#f6f7f9"/>
<circle cx="1852.0" cy="733.0" r="44.0" fill="url(#halo)"/>
<polygon points="1887.6,679.1 1891.1,686.9 1899.6,687.8 1893.2,693.5 1895.0,701.9 1887.6,697.6 1880.2,701.9 1882.0,693.5 1875.6,687.8 1884.1,686.9" fill="none" stroke="#c6c8ce" stroke-width="1" stroke-linejoin="round"/>
<rect x="1588.2" y="800.8" width="102" height="114.4" rx="4" fill="#f6f7f9"/>
<circle cx="1636.0" cy="858.0" r="40.0" fill="url(#halo)"/>
<polygon points="1670.6,809.1 1674.1,816.9 1682.6,817.8 1676.2,823.5 1678.0,831.9 1670.6,827.6 1663.2,831.9 1665.0,823.5 1658.6,817.8 1667.1,816.9" fill="none" stroke="#c6c8ce" stroke-width="1" stroke-linejoin="round"/>
<rect x="1696.0" y="800.8" width="102" height="114.4" rx="4" fill="#f6f7f9"/>
<circle cx="1744.0" cy="852.0" r="40.0" fill="url(#halo)"/>
<polygon points="1778.4,809.1 1781.9,816.9 1790.4,817.8 1784.0,823.5 1785.8,831.9 1778.4,827.6 1771.0,831.9 1772.8,823.5 1766.4,817.8 1774.9,816.9" fill="none" stroke="#c6c8ce" stroke-width="1" stroke-linejoin="round"/>
<rect x="1805.2" y="800.8" width="102" height="114.4" rx="4" fill="#f6f7f9"/>
<circle cx="1852.0" cy="858.0" r="42.0" fill="url(#halo)"/>
<polygon points="1887.6,809.1 1891.1,816.9 1899.6,817.8 1893.2,823.5 1895.0,831.9 1887.6,827.6 1880.2,831.9 1882.0,823.5 1875.6,817.8 1884.1,816.9" fill="none" stroke="#c6c8ce" stroke-width="1" stroke-linejoin="round"/>
<polygon points="1606.9,144.4 1655.6,140.7 1655.6,192.3 1609.4,188.2" fill="none" stroke="#4385c4" stroke-width="2" stroke-linejoin="round"/>
<path d="M1615.0 143.8L1617.1 188.9" stroke="#4385c4" stroke-width="1.0"/>
<path d="M1607.3 151.7L1655.6 149.3" stroke="#4385c4" stroke-width="1.0"/>
<path d="M1623.1 143.2L1624.8 189.6" stroke="#4385c4" stroke-width="1.0"/>
<path d="M1607.7 159.0L1655.6 157.9" stroke="#4385c4" stroke-width="1.0"/>
<path d="M1631.3 142.5L1632.5 190.3" stroke="#4385c4" stroke-width="1.8"/>
<path d="M1608.1 166.3L1655.6 166.5" stroke="#4385c4" stroke-width="1.8"/>
<path d="M1639.4 141.9L1640.2 191.0" stroke="#4385c4" stroke-width="1.0"/>
<path d="M1608.5 173.6L1655.6 175.1" stroke="#4385c4" stroke-width="1.0"/>
<path d="M1647.5 141.3L1647.9 191.7" stroke="#4385c4" stroke-width="1.0"/>
<path d="M1608.9 180.9L1655.6 183.7" stroke="#4385c4" stroke-width="1.0"/>
<polygon points="1722.5,144.1 1734.0,144.1 1736.3,177.9 1772.9,179.4 1772.4,193.2 1725.8,188.7" fill="none" stroke="#4385c4" stroke-width="1.7" stroke-linejoin="miter"/>
<path d="M1730.3 153.0 L1734.4 153.0 M1728.3 160.8 L1735.0 160.8 M1730.7 169.4 L1735.5 169.4 M1729.9 178.1 L1736.3 178.1 M1736.0 178.4 L1736.2 185.0 M1743.9 180.0 L1743.9 183.5 M1753.2 180.0 L1753.2 186.8 M1762.6 180.4 L1762.6 184.5" stroke="#4385c4" stroke-width="1.2" fill="none"/>
<path d="M1847.9 142.5 L1876.3 141.5 Q1882.0 141.5 1882.0 147.2 L1880.7 178.4 Q1880.4 183.3 1875.4 183.3 L1868.4 182.8 L1860.3 193.2 L1853.3 182.2 L1847.5 181.7 Q1842.6 181.2 1842.6 176.8 L1842.6 147.7 Q1842.6 142.8 1847.9 142.5 Z" fill="none" stroke="#4385c4" stroke-width="2" stroke-linejoin="round"/>
<path d="M1853.0 154.9 L1870.5 154.3 M1853.0 160.5 L1869.7 160.0 M1853.0 164.9 L1870.5 165.8 M1853.0 170.0 L1864.8 171.3" stroke="#4385c4" stroke-width="1.6" fill="none" stroke-linecap="round"/>
<polygon points="1605.3,332.6 1624.7,311.4 1669.4,317.7 1656.5,340.8" fill="url(#stpl)" stroke="#80858d" stroke-width="1" stroke-linejoin="round"/>
<polygon points="1605.3,332.6 1656.5,340.8 1655.4,384.6 1608.6,374.7" fill="url(#stp)" stroke="#80858d" stroke-width="1" stroke-linejoin="round"/>
<polygon points="1656.5,340.8 1669.4,317.7 1667.2,360.6 1655.4,384.6" fill="url(#stpl)" stroke="#80858d" stroke-width="1" stroke-linejoin="round"/>

<path d="M1722.2 325.6 L1723.7 367.2 A23.6 12.4 0 0 0 1770.9 367.2 L1772.4 325.6 Z" fill="url(#stp)" stroke="#80858d" stroke-width="1"/>
<path d="M1722.2 325.6 L1723.7 367.2 A23.6 12.4 0 0 0 1770.9 367.2 L1772.4 325.6 Z" fill="url(#ghc)"/>
<ellipse cx="1747.3" cy="325.6" rx="25.1" ry="12.4" fill="url(#stpl)" stroke="#80858d" stroke-width="1"/>
<polygon points="1822.1,332.6 1841.4,311.4 1886.5,317.7 1873.6,340.8" fill="#b23135" stroke="#7d1f23" stroke-width="0.8" stroke-linejoin="round"/>
<polygon points="1822.1,332.6 1873.6,340.8 1872.3,384.6 1825.4,374.7" fill="#97272b" stroke="#7d1f23" stroke-width="0.8" stroke-linejoin="round"/>
<polygon points="1873.6,340.8 1886.5,317.7 1884.4,360.6 1872.3,384.6" fill="#a92d31" stroke="#7d1f23" stroke-width="0.8" stroke-linejoin="round"/>
<path d="M1613.6 449.3 L1615.7 491.9 A23.1 12.5 0 0 0 1662.0 491.9 L1664.3 449.3 Z" fill="url(#gcyl)" stroke="#7a4a1d" stroke-width="0.9"/>
<ellipse cx="1638.9" cy="449.3" rx="25.4" ry="11.9" fill="#c67b37" stroke="#7a4a1d" stroke-width="0.9"/>
<ellipse cx="1747.3" cy="469.9" rx="24.4" ry="24.4" fill="url(#gsph)" stroke="#2f6496" stroke-width="0.8"/>
<path d="M1830.7 468.8 L1832.7 489.9 L1837.6 491.1 L1838.9 486.1 L1843.1 494.4 L1850.5 496.9 L1854.6 483.6 L1867.0 500.2 L1874.4 504.3 L1876.6 502.6 L1877.7 458.1 L1874.4 454.3 L1867.0 452.3 L1858.8 460.5 L1850.5 454.8 L1843.1 460.5 L1835.6 462.2 Z" fill="url(#gscr)"/>
<path d="M1834.3 469.6 C1835.6 462.2 1844.7 462.2 1848.0 468.8 C1850.5 473.7 1849.7 480.3 1852.2 476.2 C1848.9 465.5 1847.2 457.2 1853.0 457.2 C1858.8 458.1 1858.8 467.1 1863.7 472.9 C1868.7 478.7 1873.6 479.5 1876.1 481.2" fill="none" stroke="#b3cbe7" stroke-width="6.5" stroke-linecap="round" stroke-linejoin="round"/>
<path d="M1867.0 468.0 C1864.5 460.5 1866.2 453.9 1869.5 454.3 M1874.9 457.2 L1874.9 460.5" fill="none" stroke="#b3cbe7" stroke-width="5" stroke-linecap="round"/>
<polygon points="1645.8,577.3 1631.3,602.1 1607.8,617.3 1626.8,591.4" fill="#457f37" stroke="#3a6e2e" stroke-width="0.8" stroke-linejoin="round"/>
<polygon points="1607.8,617.3 1631.3,602.1 1655.7,626.9" fill="#519542" stroke="#3a6e2e" stroke-width="0.8" stroke-linejoin="round"/>
<polygon points="1645.8,577.3 1667.2,600.4 1655.7,626.9 1631.3,602.1" fill="#6cb358" stroke="#3a6e2e" stroke-width="0.8" stroke-linejoin="round"/>
<path d="M1747.3 577.0 L1724.4 617.3 A23.3 15.2 0 0 0 1770.6 618.3 Z" fill="url(#gcone)" stroke="#43205a" stroke-width="0.8" stroke-linejoin="round"/>
<path d="M1824.9 616.1 C1830.7 603.7 1840.6 585.6 1858.8 577.0 C1872.0 576.5 1883.5 587.2 1884.7 601.3 L1872.3 627.2 Z" fill="url(#grr)" stroke="#4f7f89" stroke-width="0.9" stroke-linejoin="round"/>
<path d="M1824.9 616.1 C1827.4 607.0 1837.3 600.4 1847.2 600.8 C1860.4 602.1 1872.0 613.6 1872.3 627.2 Z" fill="#6c98a1" stroke="#4f7f89" stroke-width="0.9" stroke-linejoin="round"/>
<g transform="translate(1606.5 726.5) matrix(1 0.17 -0.28 0.92 0 0)" font-family="Liberation Sans,sans-serif" font-weight="bold" font-style="italic" font-size="23.8" letter-spacing="-0.3"><text x="0" y="0" fill="#952428" filter="url(#ext)">TEXT</text><text x="0" y="0" fill="#c4373b">TEXT</text></g>
<polygon points="1714.3,714.9 1765.0,723.2 1763.8,767.4 1717.6,757.5" fill="#343e79" stroke="#262e5c" stroke-width="0.9" stroke-linejoin="round"/>
<polygon points="1765.0,723.2 1774.9,740.2 1763.8,767.4" fill="#404b8d" stroke="#262e5c" stroke-width="0.9" stroke-linejoin="round"/>
<polygon points="1855.8,707.6 1825.7,756.2 1872.3,767.1" fill="#d8c140" stroke="#9a8726" stroke-width="1.2" stroke-linejoin="round"/>
<polygon points="1855.8,707.6 1872.3,767.1 1883.5,740.2" fill="#ecd750" stroke="#9a8726" stroke-width="1.2" stroke-linejoin="round"/>
<path d="M1614.9 866.9 C1616.1 852.8 1627.6 843.8 1638.9 843.8 C1650.7 843.8 1662.3 852.8 1663.1 866.9 A24.3 14.9 0 0 1 1614.9 866.9 Z" fill="url(#gdome)" stroke="#8a1c66" stroke-width="0.6"/>
<polygon points="1722.6,831.0 1725.9,844.2 1753.1,848.7 1752.3,894.4 1728.3,888.3 1724.2,854.5" fill="#343e7a" stroke="#262e5c" stroke-width="0.9" stroke-linejoin="round"/>
<polygon points="1753.1,848.7 1774.6,839.6 1770.9,881.7 1752.3,894.4" fill="#3c4787" stroke="#262e5c" stroke-width="0.9" stroke-linejoin="round"/>
<polygon points="1722.6,831.0 1742.4,823.9 1766.3,826.7 1774.6,839.6 1753.1,848.7 1725.9,844.2" fill="#414b8f" stroke="#262e5c" stroke-width="0.9" stroke-linejoin="round"/>
<path d="M1832.7 877.6 C1838.9 854.5 1847.2 835.5 1855.8 835.5 C1864.5 835.5 1872.8 854.5 1879.4 877.6 A23.4 14.0 0 0 1 1832.7 877.6 Z" fill="url(#gpar)" stroke="#7e8083" stroke-width="1.300"/>
</svg>
<div class="abs" style="left:1588px;top:219px;width:259px;height:56px;background:#f4f5f8;border-radius:4px;border:1px solid #e3e5eb;box-shadow:0 1px 2px rgba(60,70,90,.14);font-size:18px;line-height:51px;padding-left:13px;color:#4a5468;letter-spacing:0.4px;white-space:nowrap">Basic Shapes</div>
<svg class="abs" style="left:1822px;top:236px" width="16" height="22" viewBox="0 0 16 22"><path d="M3.800 8.300 L8 3 L12.200 8.300 Z M3.800 13.700 L8 19 L12.200 13.700 Z" fill="#111"/></svg>
<div class="abs" style="left:1850px;top:219px;width:60px;height:56px;background:#f4f5f8;border-radius:4px;border:1px solid #e3e5eb;box-shadow:0 1px 2px rgba(60,70,90,.14)"></div>
<svg class="abs" style="left:1860px;top:228px" width="40" height="40" viewBox="1860 228 40 40"><circle cx="1876.300" cy="244.500" r="10.300" fill="none" stroke="#000" stroke-width="2.600"/><path d="M1883.800 252.500 L1891 259.800" stroke="#000" stroke-width="3" stroke-linecap="round"/></svg><!--PANEL-END-->
<svg class="abs" style="left:3px;top:5px" width="54" height="54" viewBox="0 0 54 54"><rect x="0.0" y="0.0" width="16.4" height="16.4" fill="#dc5238"/><text x="8.2" y="13.6" font-family="Liberation Sans,sans-serif" font-weight="bold" font-size="14.5" fill="#fff" text-anchor="middle">T</text><rect x="18.8" y="0.0" width="16.4" height="16.4" fill="#e4814b"/><text x="27.0" y="13.6" font-family="Liberation Sans,sans-serif" font-weight="bold" font-size="14.5" fill="#fff" text-anchor="middle">I</text><rect x="37.6" y="0.0" width="16.4" height="16.4" fill="#e89a4c"/><text x="45.8" y="13.6" font-family="Liberation Sans,sans-serif" font-weight="bold" font-size="14.5" fill="#fff" text-anchor="middle">N</text><rect x="0.0" y="18.8" width="16.4" height="16.4" fill="#5eb062"/><text x="8.2" y="32.4" font-family="Liberation Sans,sans-serif" font-weight="bold" font-size="14.5" fill="#fff" text-anchor="middle">K</text><rect x="18.8" y="18.8" width="16.4" height="16.4" fill="#98c63d"/><text x="27.0" y="32.4" font-family="Liberation Sans,sans-serif" font-weight="bold" font-size="14.5" fill="#fff" text-anchor="middle">E</text><rect x="37.6" y="18.8" width="16.4" height="16.4" fill="#d0ce4c"/><text x="45.8" y="32.4" font-family="Liberation Sans,sans-serif" font-weight="bold" font-size="14.5" fill="#fff" text-anchor="middle">R</text><rect x="0.0" y="37.6" width="16.4" height="16.4" fill="#3c62b0"/><text x="8.2" y="51.2" font-family="Liberation Sans,sans-serif" font-weight="bold" font-size="14.5" fill="#fff" text-anchor="middle">C</text><rect x="18.8" y="37.6" width="16.4" height="16.4" fill="#6496c8"/><text x="27.0" y="51.2" font-family="Liberation Sans,sans-serif" font-weight="bold" font-size="14.5" fill="#fff" text-anchor="middle">A</text><rect x="37.6" y="37.6" width="16.4" height="16.4" fill="#87b6da"/><text x="45.8" y="51.2" font-family="Liberation Sans,sans-serif" font-weight="bold" font-size="14.5" fill="#fff" text-anchor="middle">D</text></svg>
<svg class="abs" style="left:73px;top:16px" width="30" height="28" viewBox="0 0 30 28">
<rect x="2" y="2.3" width="26" height="23.4" rx="2" fill="#fafafa" stroke="#000" stroke-width="2"/>
<rect x="1" y="1.3" width="28" height="3.4" rx="1.5" fill="#000"/>
<g fill="#000"><rect x="6.2" y="8.2" width="3.6" height="3"/><rect x="12" y="8.6" width="12" height="2.4"/>
<rect x="6.2" y="14" width="3.6" height="3"/><rect x="12" y="14.3" width="12" height="2.4"/>
<rect x="6.2" y="19.7" width="3.6" height="3"/><rect x="12" y="20" width="12" height="2.4"/></g>
</svg>
<div id="title" class="abs">The primi</div>
<div id="saved" class="abs">All changes saved</div>
<div class="htile" style="left:1548px;width:61px;background:#7092d6;border-left:none"></div>
<div class="htile" style="left:1609px;width:62px;border-left:none"></div>
<div class="htile" style="left:1671px;width:62px"></div>
<div class="htile" style="left:1733px;width:63px"></div>
<div class="htile" style="left:1796px;width:62px"></div>
<div class="htile" style="left:1858px;width:44px"></div>

<svg class="abs" style="left:1540px;top:0" width="362" height="64" viewBox="1540 0 362 64" fill="none">
<!-- grid -->
<rect x="1562.8" y="16.2" width="31.4" height="31" rx="2.5" fill="#fff"/>
<path d="M1572.7 16 V48 M1584.3 16 V48 M1562 26.200 H1595 M1562 37.400 H1595" stroke="#7092d6" stroke-width="1.800"/>
<!-- apple -->
<path d="M1635.300 27.300 C1636.500 24.800 1640 21.600 1643.500 21.500 C1646.500 21.400 1648.500 22.800 1649.600 23.900 C1652 26.400 1653.200 28.800 1653.800 30.900 C1655 34.500 1655.800 37.500 1655.300 39.400 C1655 41 1654.300 42 1653.500 42.600 C1652 43.800 1651 44 1650.300 44.800 C1649.300 46 1648.800 47.600 1647.400 48.500 C1646.200 49.300 1644.800 49.500 1643.500 49.500 C1641 49.500 1639 48.800 1637.300 47.800 C1635 46.500 1633 45.300 1631.200 43.600 C1629.500 42 1628.300 40 1628.100 38 C1627.900 36 1628.600 34.300 1629.800 32.800 C1630.800 31.500 1632.300 30.500 1633.600 29.700 C1634.300 29.200 1635 28.300 1635.300 27.300 Z" stroke="#3b4a60" stroke-width="3.700" stroke-linejoin="round"/>
<path d="M1632.700 13.600 C1629 15.800 1627.300 19.500 1628.500 22.500 C1629.200 24.200 1630.800 25.300 1632.500 25.500 C1634 24.800 1635 23.400 1635.100 21.500 C1635.200 18.800 1634 15.800 1632.700 13.600 Z" fill="#3b4a60"/>
<path d="M1626.200 25.600 C1629 25.300 1632.500 25.800 1635.300 27.300" stroke="#3b4a60" stroke-width="2.200" stroke-linecap="round"/>
<path d="M1640.500 9.400 V18.300 M1647.500 10.300 V18.800 M1654.600 15.500 V24.500" stroke="#3b4a60" stroke-width="2.900" stroke-linecap="round"/>
<path d="M1654.600 24.500 L1656 26.400 L1656 20 Z" fill="#3b4a60"/>
<path d="M1641.600 29.200 C1644.500 29.200 1646.500 31.500 1648.200 34.200" stroke="#3b4a60" stroke-width="2" stroke-linecap="round"/>
<!-- pickaxe -->
<g fill="#3b4a60"><rect x="1690.36" y="12.75" width="12.32" height="3.38"/><rect x="1687.28" y="15.98" width="3.08" height="3.08"/><rect x="1702.68" y="15.83" width="6.16" height="3.38"/><rect x="1690.36" y="18.91" width="9.24" height="3.38"/><rect x="1708.84" y="18.91" width="6.16" height="3.38"/><rect x="1699.60" y="22.14" width="3.08" height="3.08"/><rect x="1708.84" y="21.99" width="6.16" height="3.38"/><rect x="1702.68" y="25.22" width="3.08" height="3.08"/><rect x="1715.00" y="25.22" width="3.08" height="6.16"/><rect x="1699.60" y="28.15" width="9.24" height="3.38"/><rect x="1696.52" y="31.38" width="3.08" height="3.08"/><rect x="1702.68" y="31.38" width="3.08" height="3.08"/><rect x="1708.84" y="31.38" width="3.08" height="3.08"/><rect x="1718.08" y="31.38" width="3.08" height="12.32"/><rect x="1693.44" y="34.46" width="3.08" height="3.08"/><rect x="1699.60" y="34.46" width="3.08" height="3.08"/><rect x="1711.92" y="34.46" width="3.08" height="9.24"/><rect x="1690.36" y="37.54" width="3.08" height="3.08"/><rect x="1696.52" y="37.54" width="3.08" height="3.08"/><rect x="1687.28" y="40.62" width="3.08" height="3.08"/><rect x="1693.44" y="40.62" width="3.08" height="3.08"/><rect x="1684.20" y="43.70" width="3.08" height="3.08"/><rect x="1690.36" y="43.70" width="3.08" height="3.08"/><rect x="1715.00" y="43.70" width="3.08" height="3.08"/><rect x="1684.20" y="46.63" width="6.16" height="3.38"/></g>
<!-- brick -->
<path d="M1747.500 27 Q1747.500 25.300 1749.200 25.300 H1752.700 V20.600 Q1752.700 19 1754.300 19 H1760.600 Q1762.200 19 1762.200 20.600 V25.300 H1765.400 V20.600 Q1765.400 19 1767 19 H1773.400 Q1775 19 1775 20.600 V25.300 H1778.500 Q1780.200 25.300 1780.200 27 V44.200 H1747.500 Z" fill="#3b4a60"/>
<!-- person -->
<circle cx="1827.500" cy="23.200" r="7.600" stroke="#3b4a60" stroke-width="1.700"/>
<path d="M1834.500 50.800 H1817.200 Q1815.300 50.800 1815.300 48.900 V45.500 A12.200 12.200 0 0 1 1838.800 40.300" stroke="#3b4a60" stroke-width="1.700"/>
<circle cx="1845.200" cy="49.200" r="8.200" fill="#3b4a60"/>
<path d="M1840 49.200 H1850.400 M1845.200 44 V54.400" stroke="#fff" stroke-width="1.800"/>
<!-- avatar -->
<defs><clipPath id="avc"><circle cx="1889.200" cy="31.400" r="28.200"/></clipPath>
<linearGradient id="avg" x1="0" y1="0" x2="0" y2="1"><stop offset="0" stop-color="#c6d9ea"/><stop offset="0.7" stop-color="#b7cde1"/><stop offset="0.75" stop-color="#c6d8e9"/><stop offset="1" stop-color="#bed2e5"/></linearGradient></defs>
<g clip-path="url(#avc)">
<rect x="1858" y="0" width="50" height="64" fill="url(#avg)"/>
<g stroke="#5f86ad" stroke-width="1.600" fill="none" stroke-linecap="round">
<path d="M1874.500 23.500 L1872.300 27.500 L1870.800 32"/>
<path d="M1881.200 41.500 L1877.500 46.500 L1875.500 49.500"/>
<path d="M1895.800 42.500 L1899.500 46.500"/>
</g>
<g fill="#2b5586">
<path d="M1884.800 17.500 Q1884.800 11.700 1889.900 11.700 Q1895 11.700 1895 17.500 L1894.500 21 Q1893 23.600 1889.900 23.600 Q1886.800 23.600 1885.300 21 Z"/>
<rect x="1889.700" y="8.300" width="1.200" height="3.800" fill="#5f86ad"/>
<path d="M1871.300 21.500 Q1872.500 17.800 1877.500 17.300 Q1881.500 17.500 1882.200 20.500 L1881 23.600 Q1876 22.500 1872.300 23.800 Z"/>
<path d="M1896.800 20.500 Q1898 17.200 1902.500 17 L1902.500 24.200 Q1899 23 1897.500 23.600 Z"/>
<path d="M1881.500 24 Q1885 22.800 1889.900 24.500 Q1895 22.800 1898.500 24 Q1901.800 28 1901.500 33 Q1901 39 1897.500 43.500 Q1893 45 1889.500 42.500 Q1884 45 1880.500 42 Q1877.800 37 1878.200 31 Q1878.800 26.500 1881.500 24 Z"/>
<ellipse cx="1875.300" cy="51.500" rx="4" ry="3.600"/>
<path d="M1900 45.500 L1903 45 L1903 54.500 L1900.500 53.500 Z"/>
</g>
<circle cx="1889.900" cy="32.300" r="5.200" fill="#f3f6f9"/>
<path d="M1889.900 29.300 L1892.600 34.500 H1887.200 Z" fill="#c9d6e4"/>
<circle cx="1882.300" cy="29.500" r="2" fill="#5f86ad"/><circle cx="1881.500" cy="36" r="2.200" fill="#5f86ad"/><circle cx="1886.500" cy="41" r="1.500" fill="#8fa9c4"/>
<rect x="1886.700" y="16.200" width="1.900" height="2.600" rx="0.600" fill="#e8b24a"/><rect x="1890.900" y="16.200" width="1.900" height="2.600" rx="0.600" fill="#e8b24a"/>
<circle cx="1868.400" cy="36.300" r="3" fill="#7d9fc0"/><circle cx="1868.400" cy="36.300" r="1.200" fill="#dfe9f2"/>
<circle cx="1872.700" cy="38.800" r="1.200" fill="#7d9fc0"/><circle cx="1864.500" cy="39.500" r="1.200" fill="#7d9fc0"/><circle cx="1866.500" cy="42.500" r="1.100" fill="#6a8fb5"/>
</g>
</svg>



<div class="vdiv" style="left:240px"></div><div class="vdiv" style="left:361px"></div>
<div class="vdiv" style="left:1175px"></div><div class="vdiv" style="left:1266px"></div>
<div class="vdiv" style="left:1387px"></div><div class="vdiv" style="left:1568px"></div>
<svg class="abs" style="left:0;top:62px" width="1580" height="60" viewBox="0 62 1580 60" fill="none">
<!-- copy -->
<rect x="15.7" y="77.7" width="21.3" height="21.3" stroke="#c9d0dc" stroke-width="1.3"/>
<rect x="23.2" y="85.2" width="21.3" height="21.3" stroke="#c9d0dc" stroke-width="1.3" fill="#f1f1f4"/>
<!-- paste -->
<rect x="75.900" y="81" width="19.400" height="25.200" stroke="#2a373b" stroke-width="1.550"/>
<path d="M79.300 80.400 L81.300 84.600 L89.700 84.600 L91.700 80.400 L88.700 80.400 L88.700 77.100 L82.400 77.100 L82.400 80.400 Z" fill="#2a373b"/>
<rect x="84.200" y="78.700" width="2.700" height="2.400" rx="0.500" fill="#f1f1f4"/>
<rect x="87.900" y="88.600" width="13.400" height="13.400" stroke="#2a373b" stroke-width="1.550" fill="#f1f1f4"/>
<!-- duplicate -->
<path d="M138.400 91.900 L134 92.700 L137.400 109.100 L153.900 105.600 L153.300 103.400" stroke="#c9d0dc" stroke-width="1.200" stroke-linejoin="round"/>
<path d="M144 84.600 L138.300 85.200 L140.200 104 L158.800 102.100 L158.300 99.400" stroke="#c9d0dc" stroke-width="1.700" stroke-linejoin="round"/>
<rect x="145.500" y="78.400" width="19.400" height="19.400" stroke="#c9d0dc" stroke-width="2.800" stroke-linejoin="round"/>
<!-- trash -->
<path d="M197.300 80 H222.500" stroke="#c9d0dc" stroke-width="2.300" stroke-linecap="round"/>
<path d="M205.400 79.500 C205.400 73.500 214.400 73.500 214.400 79.500" stroke="#c9d0dc" stroke-width="1.600"/>
<path d="M199 83.600 L199.200 102.500 Q199.400 106.600 203.500 106.600 L216 106.600 Q220.100 106.600 220.300 102.500 L220.500 83.600" stroke="#c9d0dc" stroke-width="2.900" stroke-linecap="round"/>
<path d="M204.700 84.500 V99.800 M215.200 84.500 V99.800" stroke="#c9d0dc" stroke-width="1.400"/>
<path d="M209.950 84.500 V99.800" stroke="#c9d0dc" stroke-width="1.900"/>
<!-- undo -->
<path d="M258.2 91.3 L269.3 82.9 L269.3 88.9 C279 88.6 284.6 91.5 285 99.3 C282.5 95 278 93.6 269.3 93.9 L269.3 99.4 Z" fill="#2a373b"/>
<!-- redo -->
<path d="M343.8 91.3 L332.7 82.9 L332.7 88.9 C323 88.6 317.4 91.5 317 99.3 C319.5 95 324 93.6 332.7 93.9 L332.7 99.4 Z" fill="#c9d0dc"/>
<!-- bulb -->
<path d="M1197.2 101.5 L1197.2 98.5 C1197.2 95 1191.4 93 1191.4 87 A10.7 10.7 0 0 1 1212.8 87 C1212.800 93 1207 95 1207 98.500 L1207 101.500 Z" stroke="#c9d0dc" stroke-width="2.500" stroke-linejoin="round"/>
<path d="M1196.500 86 A6.5 6.5 0 0 1 1200.500 81.500" stroke="#c9d0dc" stroke-width="1.600"/>
<path d="M1197.800 105.300 H1206.400" stroke="#c9d0dc" stroke-width="2"/>
<path d="M1199 109 H1205.200" stroke="#c9d0dc" stroke-width="1.600"/>
<path d="M1230 77.500 V106.500" stroke="#dfe3ea" stroke-width="1.600"/>
<path d="M1240.600 87.900 H1253.700 L1247.150 95.200 Z" fill="#2a373b"/>
<!-- group -->
<path d="M1283.400 79.700 H1306.200 V87.500 A11.200 11.200 0 1 1 1291.500 102.600 H1283.400 Z" stroke="#c9d0dc" stroke-width="2.600" stroke-linejoin="round"/>
<!-- ungroup -->
<rect x="1344.700" y="79.600" width="23.500" height="23" stroke="#c9d0dc" stroke-width="2.200"/>
<circle cx="1362.600" cy="97.600" r="10.800" stroke="#c9d0dc" stroke-width="2.600" fill="#f1f1f4"/>
<!-- align -->
<path d="M1407.400 76.500 V107.500" stroke="#c9d0dc" stroke-width="2.400" stroke-linecap="round"/>
<rect x="1413" y="81.200" width="17.500" height="8" stroke="#c9d0dc" stroke-width="2"/>
<rect x="1413.200" y="95" width="10.800" height="7.800" stroke="#c9d0dc" stroke-width="2.400" fill="#e3e5ec"/>
<!-- mirror -->
<path d="M1478 74.500 V110" stroke="#c9d0dc" stroke-width="3" stroke-linecap="round"/>
<path d="M1472.600 81.200 V103.200 H1460 Z" stroke="#c9d0dc" stroke-width="1.500" stroke-linejoin="round"/>
<path d="M1484 82.500 V102.200 H1495 Z" stroke="#c9d0dc" stroke-width="2.600" stroke-linejoin="round"/>
<!-- magnet -->
<g transform="rotate(-19 1533.4 85.9)">
<path d="M1522.8000000000002 98.7 V85.9 A10.6 10.6 0 0 1 1544.0 85.9 V98.7 H1537.7 V85.9 A4.3 4.3 0 0 0 1529.1000000000001 85.9 V98.7 Z" stroke="#c9d0dc" stroke-width="2.800" stroke-linejoin="round" fill="none"/>
<path d="M1522.8000000000002 92.5 H1529.1000000000001 M1537.7 92.5 H1544.0" stroke="#c9d0dc" stroke-width="2.400"/>
</g>
<g fill="#c9d0dc"><circle cx="1521.500" cy="105.300" r="1.650"/><ellipse cx="1526.300" cy="108.300" rx="2" ry="1.500"/><ellipse cx="1532.300" cy="107.600" rx="2" ry="1.500" transform="rotate(-15 1532.300 107.600)"/><ellipse cx="1538" cy="105.100" rx="2" ry="1.500" transform="rotate(-25 1538 105.100)"/><ellipse cx="1543.400" cy="103" rx="2" ry="1.500"/><ellipse cx="1549.200" cy="104" rx="2" ry="1.500" transform="rotate(20 1549.200 104)"/><circle cx="1554.200" cy="106.400" r="1.650"/></g>
</svg>
<div class="tbtn" style="left:1584px;width:102px;letter-spacing:0.900px">Import</div>
<div class="tbtn" style="left:1694px;width:102px">Export</div>
<div class="tbtn" style="left:1803px;width:102px">Send To</div>


<!-- view cube -->
<svg class="abs" style="left:0;top:130px" width="160" height="160" viewBox="0 130 160 160">
<defs>
<linearGradient id="vcb" x1="0" y1="0" x2="1" y2="1"><stop offset="0" stop-color="#fbfbfb"/><stop offset="1" stop-color="#e9e9eb"/></linearGradient>
<linearGradient id="vcl" x1="0" y1="0" x2="1" y2="1"><stop offset="0" stop-color="#f6f6f7"/><stop offset="1" stop-color="#e4e4e6"/></linearGradient>
<filter id="vcs" x="-20%" y="-50%" width="140%" height="200%"><feGaussianBlur stdDeviation="0.9"/></filter>
</defs>
<polygon points="33.700,233 89.600,252.500 121.500,227.500 122.500,233 89.800,259.200 36.500,240.300" fill="#b9babf" filter="url(#vcs)"/>
<polygon points="29.3,171.200 68.300,158.400 125,166.400 91.400,182.300" fill="#fcfcfc" stroke="#c5c6ca" stroke-width="1" stroke-linejoin="round"/>
<polygon points="29.300,171.200 91.400,182.300 89.600,254.200 33.700,234.700" fill="url(#vcb)" stroke="#c5c6ca" stroke-width="1" stroke-linejoin="round"/>
<polygon points="91.400,182.300 125,166.400 121.500,229.300 89.600,254.200" fill="url(#vcl)" stroke="#c5c6ca" stroke-width="1" stroke-linejoin="round"/>
<text transform="matrix(0.98 0.245 -0.04 1.04 43.300 214.300)" font-family="Liberation Sans,sans-serif" font-weight="bold" font-size="17" fill="#b9bcc8" textLength="33" lengthAdjust="spacingAndGlyphs">BACK</text>
<text transform="matrix(0.78 -0.43 -0.03 1 99.500 221)" font-family="Liberation Sans,sans-serif" font-weight="bold" font-size="17.500" fill="#b9bcc8" textLength="21" lengthAdjust="spacingAndGlyphs">LEFT</text>
<text transform="matrix(-0.9 -0.12 0.9 -0.32 88 171.500)" font-family="Liberation Sans,sans-serif" font-weight="bold" font-size="9.500" fill="#b4b8c4" textLength="24" lengthAdjust="spacingAndGlyphs">TOP</text>
</svg>
<!-- nav buttons -->
<div class="navbtn" style="top:285px"></div><div class="navbtn" style="top:350px"></div><div class="navbtn" style="top:415px"></div><div class="navbtn" style="top:480px"></div><div class="navbtn" style="top:545px"></div>
<svg class="abs" style="left:13px;top:285px" width="52" height="312" viewBox="13 285 52 312" fill="none" stroke="#b4b4b5" stroke-width="1.600">
<path d="M26.800 311.300 L38.700 298.800 L50.700 311.300 H46.600 V321.600 H40.900 V313.300 H36.600 V321.600 H31.300 V311.300 Z" stroke-linejoin="miter"/>
<path d="M27.800 371 V364.800 H34 M43.300 364.800 H49.900 V371 M49.900 380.300 V386.700 H43.300 M34 386.700 H27.800 V380.300" stroke-width="1.700"/>
<path d="M29.200 440.700 H48.400 M38.800 431.200 V450.200" stroke-width="2.500" stroke-linecap="round"/>
<path d="M28 505.700 H49.600" stroke-width="2.500" stroke-linecap="round"/>
<path d="M37.700 558 L46.300 562.600 V574.600 M37.700 558 L29.400 562.600 V574.600 M29.400 562.600 L37.700 568 L46.300 562.600 M37.700 568 V583" stroke-width="1.400"/>
<path d="M23.800 570.800 L37.700 583.300 L52.800 570" stroke-width="1.800"/>
</svg>
<!-- settings / snap -->
<div class="abs" style="left:1451px;top:811px;width:112px;height:39px;border:1px solid #dfe3ea;border-radius:5px;background:#fcfcfd;font-size:20px;line-height:35px;text-align:center;color:#8d96a8;letter-spacing:0.68px">Settings</div>
<div class="abs" style="left:1333px;top:866px;font-size:20px;line-height:28px;color:#3f4b66;letter-spacing:0.05px;white-space:nowrap">Snap Grid</div>
<div class="abs" style="left:1442px;top:863px;width:121px;height:36px;border:1px solid #dfe3ea;border-bottom:none;border-radius:4px 4px 0 0;background:#fdfdfd"></div>
<div class="abs" style="left:1452px;top:867px;font-size:20px;line-height:28px;color:#747d88;letter-spacing:0.2px;white-space:nowrap">1.0 mm</div>
<svg class="abs" style="left:1542px;top:876px" width="12" height="10" viewBox="0 0 12 10"><path d="M1.500 7.500 L5.500 3 L9.500 7.500 Z" fill="#333"/></svg>
<!-- loading -->
<div class="abs" style="left:9px;top:858px;width:320px;height:50px;border-radius:3px;background-color:#8bc062;background-image:linear-gradient(-45deg,rgba(255,255,255,.2) 25%,transparent 25%,transparent 50%,rgba(255,255,255,.2) 50%,rgba(255,255,255,.2) 75%,transparent 75%,transparent);background-size:37.85px 37.85px;background-position:10.4px 0;color:#fff;font-size:17.500px;line-height:44px;padding-left:19px;white-space:nowrap;letter-spacing:0.42px">Loading document...</div>
<!-- collapse handle -->
<div class="abs" style="left:1553px;top:480px;width:29px;height:77px;background:#f0f1f4;border:1px solid #d9dde4;border-right:none"></div>
<svg class="abs" style="left:1553px;top:480px" width="23" height="77" viewBox="1553 480 23 77"><path d="M1564.500 503 L1572.200 518.500 L1564.500 533.500" stroke="#111" stroke-width="2.200" fill="none"/></svg>

</body>
</html>
